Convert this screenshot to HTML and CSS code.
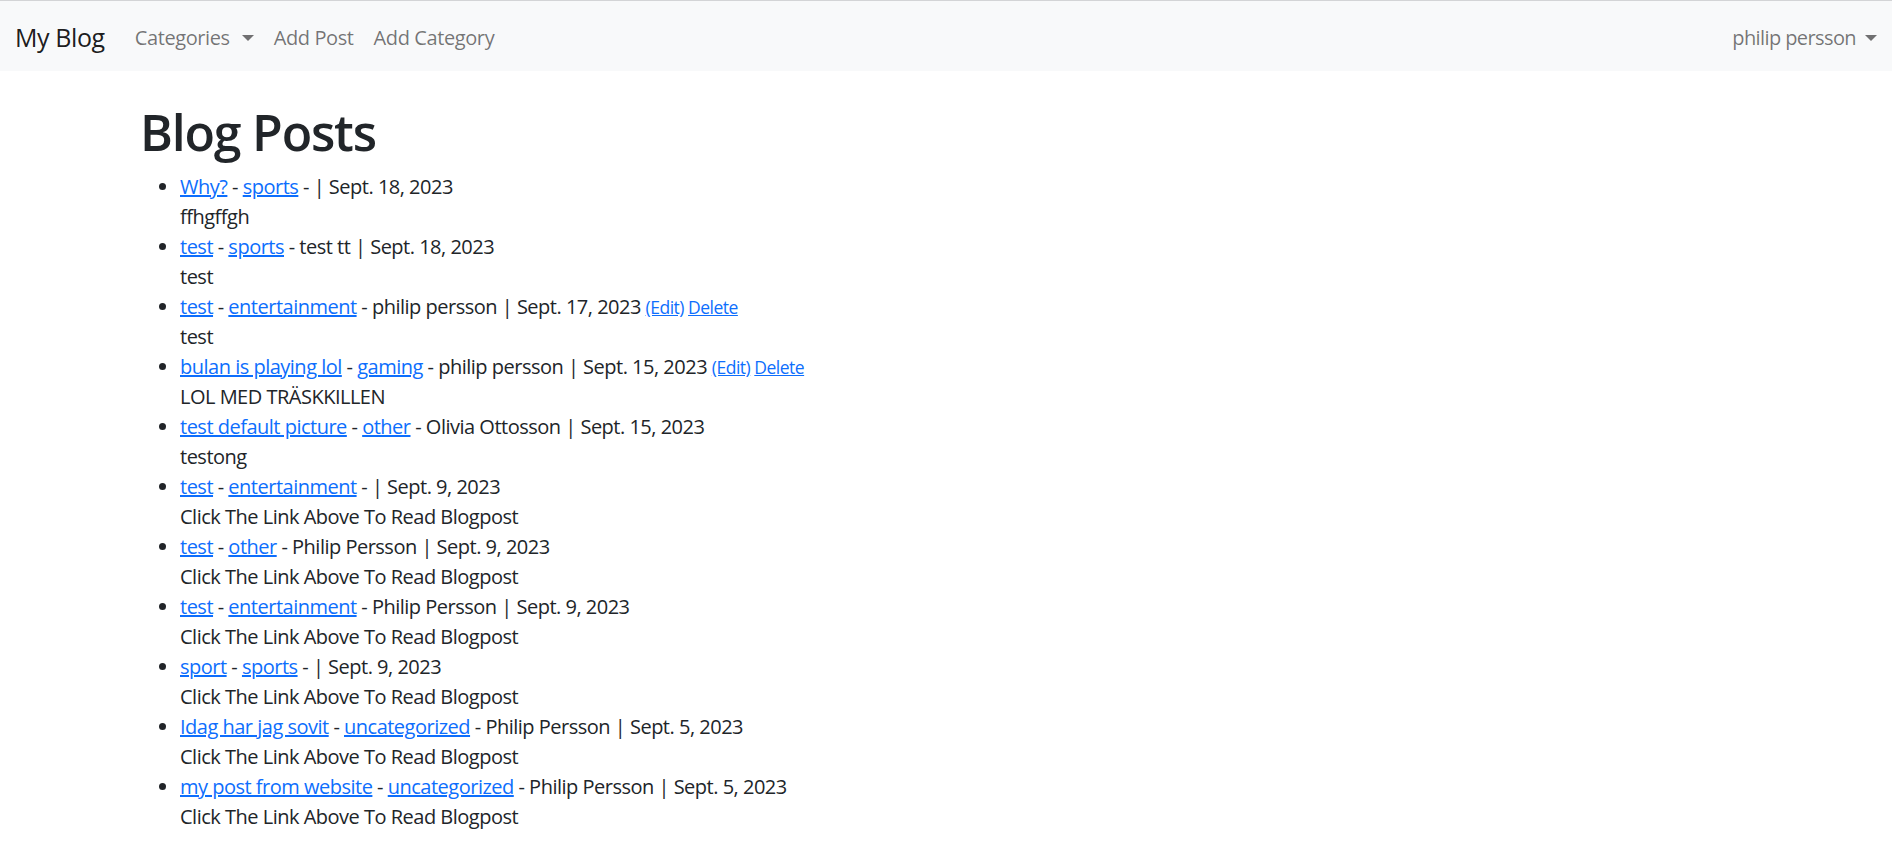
FILE: index.html
```html
<!DOCTYPE html>
<html lang="en">
<head>
<meta charset="utf-8">
<title>My Blog</title>
<link rel="stylesheet" href="styles.css">
</head>
<body>
<nav class="navbar">
  <div class="nav-left">
    <a class="brand" href="#">My Blog</a>
    <a class="nav-link dropdown-toggle" href="#">Categories</a>
    <a class="nav-link" href="#">Add Post</a>
    <a class="nav-link" href="#">Add Category</a>
  </div>
  <div class="nav-right">
    <a class="nav-link dropdown-toggle" href="#">philip persson</a>
  </div>
</nav>
<main class="container">
  <h1 class="title">Blog Posts</h1>
  <ul class="posts">
    <li><a href="#">Why?</a> - <a href="#">sports</a> - | Sept. 18, 2023<br>ffhgffgh</li>
    <li><a href="#">test</a> - <a href="#">sports</a> - test tt | Sept. 18, 2023<br>test</li>
    <li><a href="#">test</a> - <a href="#">entertainment</a> - philip persson | Sept. 17, 2023 <small><a href="#">(Edit)</a> <a href="#">Delete</a></small><br>test</li>
    <li><a href="#">bulan is playing lol</a> - <a href="#">gaming</a> - philip persson | Sept. 15, 2023 <small><a href="#">(Edit)</a> <a href="#">Delete</a></small><br>LOL MED TRÄSKKILLEN</li>
    <li><a href="#">test default picture</a> - <a href="#">other</a> - Olivia Ottosson | Sept. 15, 2023<br>testong</li>
    <li><a href="#">test</a> - <a href="#">entertainment</a> - | Sept. 9, 2023<br>Click The Link Above To Read Blogpost</li>
    <li><a href="#">test</a> - <a href="#">other</a> - Philip Persson | Sept. 9, 2023<br>Click The Link Above To Read Blogpost</li>
    <li><a href="#">test</a> - <a href="#">entertainment</a> - Philip Persson | Sept. 9, 2023<br>Click The Link Above To Read Blogpost</li>
    <li><a href="#">sport</a> - <a href="#">sports</a> - | Sept. 9, 2023<br>Click The Link Above To Read Blogpost</li>
    <li><a href="#">Idag har jag sovit</a> - <a href="#">uncategorized</a> - Philip Persson | Sept. 5, 2023<br>Click The Link Above To Read Blogpost</li>
    <li><a href="#">my post from website</a> - <a href="#">uncategorized</a> - Philip Persson | Sept. 5, 2023<br>Click The Link Above To Read Blogpost</li>
  </ul>
</main>
</body>
</html>
```
FILE: styles.css
```css
* { box-sizing: border-box; }
html, body { margin: 0; padding: 0; }
body {
  font-family: "Open Sans", "Noto Sans", sans-serif;
  font-size: 20px;
  line-height: 1.5;
  letter-spacing: -0.4px;
  color: #212529;
  background: #fff;
  border-top: 1px solid #d3d4d6;
}
a { color: #0d6efd; text-decoration: underline; }
.navbar {
  display: flex;
  align-items: center;
  justify-content: space-between;
  background: #f8f9fa;
  height: 70px;
  padding: 3px 15px 0;
}
.nav-left, .nav-right { display: flex; align-items: center; }
.brand {
  font-size: 25px;
  color: rgba(0,0,0,.9);
  text-decoration: none;
  margin-right: 20px;
  line-height: 1.5;
}
.nav-link {
  color: rgba(0,0,0,.55);
  text-decoration: none;
  padding: 10px 10px;
  line-height: 30px;
}
.nav-right .nav-link { padding-right: 0; letter-spacing: -0.6px; }
.dropdown-toggle::after {
  content: "";
  display: inline-block;
  margin-left: 12px;
  vertical-align: 4px;
  border-top: 6px solid;
  border-right: 6px solid transparent;
  border-left: 6px solid transparent;
  border-bottom: 0;
}
.nav-right .dropdown-toggle::after { margin-left: 9px; }
.container {
  max-width: 1650px;
  margin: 0 auto;
  padding: 0 15px 0 19px;
}
.title {
  font-size: 50px;
  font-weight: 600;
  line-height: 1.2;
  letter-spacing: -1.2px;
  margin: 31px 0 10px;
}
.posts {
  margin: 0 0 20px;
  padding-left: 40px;
  letter-spacing: -0.5px;
}
small { font-size: 17.5px; }
```
